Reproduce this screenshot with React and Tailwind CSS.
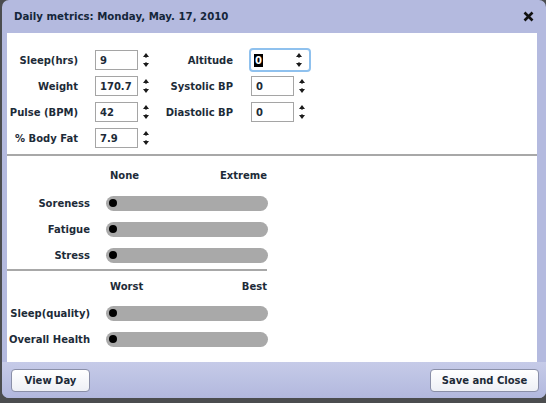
import React from "react";

const font = { fontFamily: '"DejaVu Sans", Verdana, sans-serif' };

const Spinner = () => (
  <svg width="8" height="18" viewBox="0 0 8 18" className="shrink-0">
    <path d="M4 2 L7 6 L1 6 Z" fill="#1a1a1a" />
    <path d="M4 16 L7 12 L1 12 Z" fill="#1a1a1a" />
    <rect x="3.5" y="5" width="1" height="2" fill="#1a1a1a" />
    <rect x="3.5" y="11" width="1" height="2" fill="#1a1a1a" />
  </svg>
);

const NumField = ({ value }) => (
  <div className="flex items-center">
    <div className="w-[43px] h-[20px] border border-[#a5a5a5] bg-white pl-[4px] flex items-center">
      {value}
    </div>
    <div className="ml-[4px]">
      <Spinner />
    </div>
  </div>
);

const FocusField = ({ value }) => (
  <div className="flex items-center w-[62px] h-[24px] -ml-[2px] border-2 border-[#8fc1ee] rounded-[4px] bg-white pl-[3px]">
    <span className="bg-black text-white leading-[13px] px-[1px]">{value}</span>
    <div className="ml-auto mr-[6px]">
      <Spinner />
    </div>
  </div>
);

const Slider = ({ label }) => (
  <div className="flex items-center h-[26px]">
    <div className="w-[83px] text-right whitespace-nowrap">{label}</div>
    <div className="ml-[16px] w-[162px] h-[15px] rounded-full bg-[#a9a9a9] flex items-center pl-[3px]">
      <div className="w-[8px] h-[8px] rounded-full bg-black" />
    </div>
  </div>
);

const rows = [
  ["Sleep(hrs)", "9", "Altitude", "0"],
  ["Weight", "170.7", "Systolic BP", "0"],
  ["Pulse (BPM)", "42", "Diastolic BP", "0"],
  ["% Body Fat", "7.9", null, null],
];

export default function App() {
  return (
    <div
      className="w-[546px] h-[403px] bg-[#4b4d4f] overflow-hidden text-[10px] font-bold text-[#1d2b38] whitespace-nowrap"
      style={font}
    >
      <div className="ml-[2px] w-[544px] h-[398px] bg-[#b4badf] rounded-[7px] flex flex-col">
        <div className="h-[33px] flex items-center justify-between pl-[12px] pr-[12px]">
          <span className="text-[#14263a] text-[10.2px]">Daily metrics: Monday, May. 17, 2010</span>
          <svg width="11" height="11" viewBox="0 0 11 11">
            <path d="M1.5 1.5 L9.5 9.5 M9.5 1.5 L1.5 9.5" stroke="#111" strokeWidth="2.6" />
          </svg>
        </div>

        <div className="ml-[5px] w-[530px] h-[329px] bg-white">
          <div className="pt-[17px] flex flex-col gap-[6px]">
            {rows.map(([l1, v1, l2, v2], i) => (
              <div key={l1} className="flex items-center h-[20px]">
                <div className="w-[71px] text-right">{l1}</div>
                <div className="ml-[17px]">
                  <NumField value={v1} />
                </div>
                {l2 && (
                  <>
                    <div className="w-[83px] text-right">{l2}</div>
                    <div className="ml-[18px]">
                      {i === 0 ? <FocusField value={v2} /> : <NumField value={v2} />}
                    </div>
                  </>
                )}
              </div>
            ))}
          </div>

          <div className="mt-[6px] h-[2px] bg-[#a8a8a8]" />

          <div className="pt-[11px]">
            <div className="flex h-[16px] items-center">
              <div className="ml-[103px] w-[157px] flex justify-between">
                <span>None</span>
                <span>Extreme</span>
              </div>
            </div>
            <div className="mt-[7px]">
              <Slider label="Soreness" />
              <Slider label="Fatigue" />
              <Slider label="Stress" />
            </div>
          </div>

          <div className="mt-[1px] w-[260px] h-[2px] bg-[#a8a8a8]" />

          <div className="pt-[7px]">
            <div className="flex h-[16px] items-center">
              <div className="ml-[103px] w-[157px] flex justify-between">
                <span>Worst</span>
                <span>Best</span>
              </div>
            </div>
            <div className="mt-[6px]">
              <Slider label="Sleep(quality)" />
              <Slider label="Overall Health" />
            </div>
          </div>
        </div>

        <div className="flex-1 flex items-center justify-between pl-[9px] pr-[7px] bg-gradient-to-b from-[#c6cbe8] to-[#b2b8de] rounded-b-[7px]">
          <button className="w-[79px] h-[23px] rounded-[4px] border border-[#8a8fa8] bg-gradient-to-b from-white to-[#eef0f6] font-bold">
            View Day
          </button>
          <button className="w-[109px] h-[23px] rounded-[4px] border border-[#8a8fa8] bg-gradient-to-b from-white to-[#eef0f6] font-bold">
            Save and Close
          </button>
        </div>
      </div>
    </div>
  );
}
